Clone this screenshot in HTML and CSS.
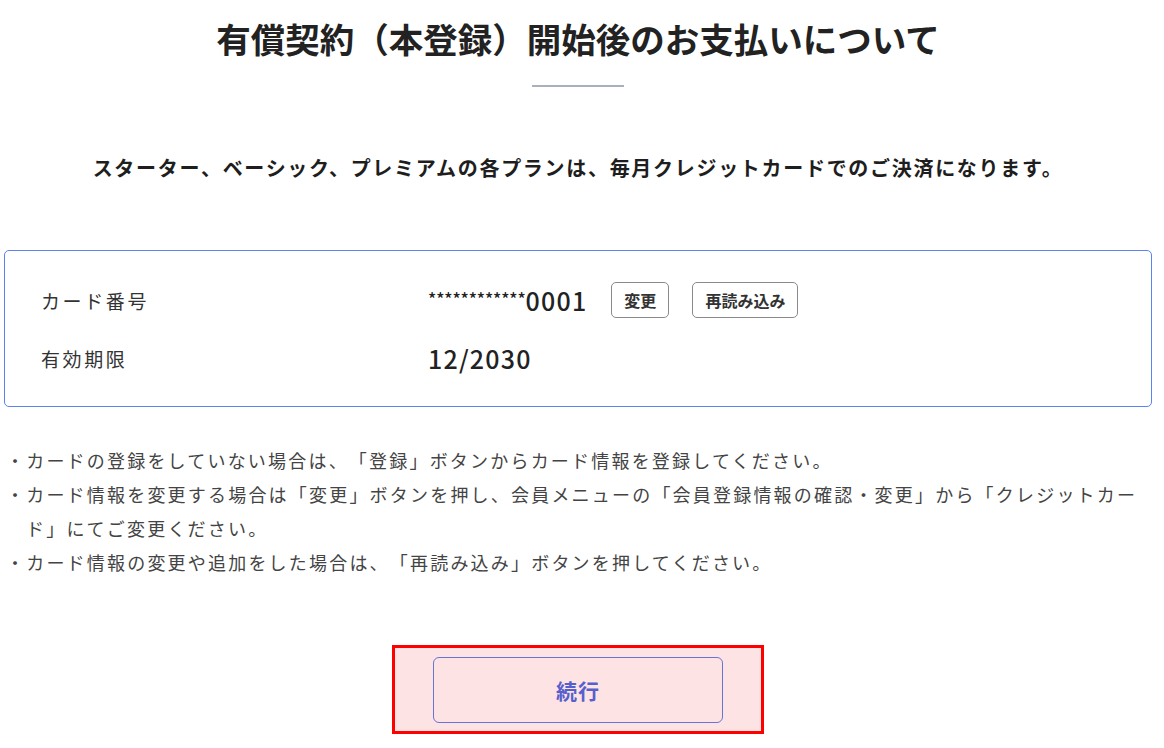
FILE: index.html
```html
<!DOCTYPE html>
<html lang="ja">
<head>
<meta charset="utf-8">
<title>有償契約（本登録）開始後のお支払いについて</title>
<link rel="stylesheet" href="styles.css">
</head>
<body>
<main class="page">
  <h1 class="title">有償契約（本登録）開始後のお支払いについて</h1>
  <div class="divider"></div>
  <p class="lead">スターター、ベーシック、プレミアムの各プランは、毎月クレジットカードでのご決済になります。</p>

  <section class="card">
    <div class="row">
      <div class="label">カード番号</div>
      <div class="value">
        <span class="num"><span class="mask">************</span>0001</span>
        <button class="small-btn btn-change" type="button">変更</button>
        <button class="small-btn" type="button">再読み込み</button>
      </div>
    </div>
    <div class="row">
      <div class="label">有効期限</div>
      <div class="value"><span class="num">12/2030</span></div>
    </div>
  </section>

  <ul class="notes">
    <li>・カードの登録をしていない場合は、「登録」ボタンからカード情報を登録してください。</li>
    <li>・カード情報を変更する場合は「変更」ボタンを押し、会員メニューの「会員登録情報の確認・変更」から「クレジットカード」にてご変更ください。</li>
    <li>・カード情報の変更や追加をした場合は、「再読み込み」ボタンを押してください。</li>
  </ul>

  <div class="action">
    <button class="continue" type="button">続行</button>
  </div>
</main>
</body>
</html>
```

FILE: styles.css
```css
* { box-sizing: border-box; }

html, body {
  margin: 0;
  padding: 0;
  background: #ffffff;
}

body {
  font-family: "Noto Sans CJK JP", "Noto Sans", sans-serif;
  color: #333333;
  text-spacing-trim: space-all;
}

.page {
  padding: 14px 12px 0 4px;
}

.title {
  margin: 0;
  font-size: 34.5px;
  line-height: 48px;
  font-weight: 700;
  text-align: center;
  color: #222222;
}

.divider {
  width: 92px;
  height: 2px;
  margin: 23px auto 0;
  background: #aab1bd;
}

.lead {
  margin: 66px 0 0;
  font-size: 20px;
  line-height: 30px;
  font-weight: 700;
  letter-spacing: 1.7px;
  text-align: center;
  color: #1e1e1e;
}

.card {
  margin-top: 67px;
  height: 157px;
  border: 1.5px solid #5b82f0;
  border-radius: 5px;
  padding: 29px 36px 0 36px;
  display: flex;
  flex-direction: column;
  gap: 18px;
}

.row {
  display: grid;
  grid-template-columns: 387px 1fr;
  align-items: center;
  height: 40px;
}

.label {
  font-size: 19px;
  letter-spacing: 2.6px;
  color: #333333;
}

.value {
  display: flex;
  align-items: center;
}

.num {
  font-size: 25px;
  font-weight: 500;
  color: #222222;
  letter-spacing: 1.2px;
}

.mask {
  font-size: 17px;
  letter-spacing: -0.1px;
  vertical-align: 5px;
}

.small-btn {
  height: 36px;
  padding: 0 12px;
  margin-left: 23px;
  border: 1px solid #8a8a8a;
  border-radius: 5px;
  background: #ffffff;
  font-family: inherit;
  font-size: 16px;
  font-weight: 700;
  color: #333333;
  letter-spacing: 0;
}

.btn-change {
  margin-left: 24px;
}

.notes {
  list-style: none;
  margin: 36px 0 0;
  padding: 0 0 0 22px;
  font-size: 18px;
  line-height: 34px;
  letter-spacing: 2.2px;
  color: #444444;
}

.notes li {
  text-indent: -20px;
}

.action {
  width: 372px;
  margin: 66px auto 0;
  padding: 9px 0 8px;
  border: 3px solid #ff0000;
  background: #fee3e5;
  display: flex;
  justify-content: center;
}

.continue {
  width: 290px;
  height: 66px;
  border: 1.5px solid #6673d9;
  border-radius: 6px;
  background: transparent;
  font-family: inherit;
  font-size: 21px;
  font-weight: 700;
  color: #5560cc;
  letter-spacing: 1px;
}
```
